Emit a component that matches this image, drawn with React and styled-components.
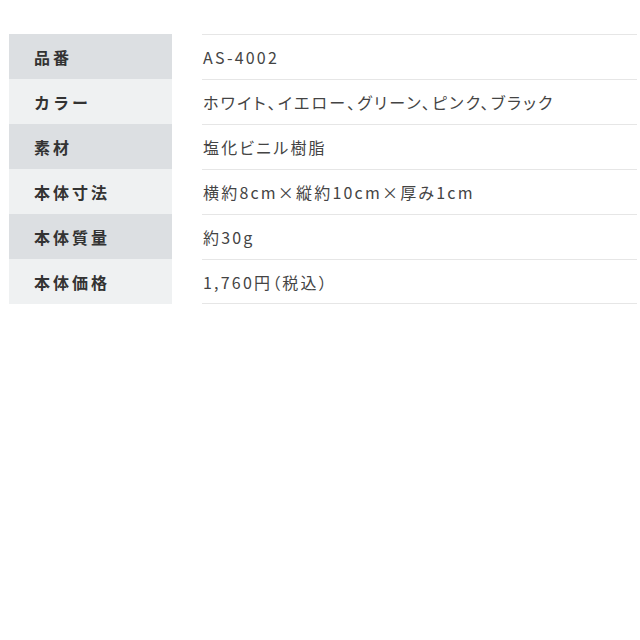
import React from "react";
import styled, { createGlobalStyle } from "styled-components";

const Global = createGlobalStyle`
  html, body { margin: 0; padding: 0; background: #fff; }
  body { font-family: "Noto Sans CJK JP", "Noto Sans", sans-serif; }
`;

const Wrap = styled.div`
  padding: 34px 3px 0 9px;
`;

const Table = styled.div`
  display: grid;
  grid-template-columns: 163px 1fr;
  column-gap: 30px;
`;

const Label = styled.div`
  height: 45px;
  display: flex;
  align-items: center;
  padding-left: 25px;
  background: ${(p) => (p.$alt ? "#eff1f2" : "#dcdfe2")};
  color: #333;
  font-weight: 700;
  font-size: 16px;
  letter-spacing: 3px;
`;

const Value = styled.div`
  height: 45px;
  box-sizing: border-box;
  display: flex;
  align-items: center;
  padding-left: 1px;
  border-top: 1px solid #e6e6e6;
  ${(p) => (p.$last ? "border-bottom: 1px solid #e6e6e6;" : "")}
  color: #444;
  font-size: 16px;
  letter-spacing: 2.2px;
  font-feature-settings: "palt";
`;

const rows = [
  ["品番", "AS-4002"],
  ["カラー", "ホワイト、イエロー、グリーン、ピンク、ブラック"],
  ["素材", "塩化ビニル樹脂"],
  ["本体寸法", "横約8cm×縦約10cm×厚み1cm"],
  ["本体質量", "約30g"],
  ["本体価格", "1,760円（税込）"],
];

export default function App() {
  return (
    <>
      <Global />
      <Wrap>
        <Table>
          {rows.map(([k, v], i) => (
            <React.Fragment key={k}>
              <Label $alt={i % 2 === 1}>{k}</Label>
              <Value $last={i === rows.length - 1}>{v}</Value>
            </React.Fragment>
          ))}
        </Table>
      </Wrap>
    </>
  );
}
